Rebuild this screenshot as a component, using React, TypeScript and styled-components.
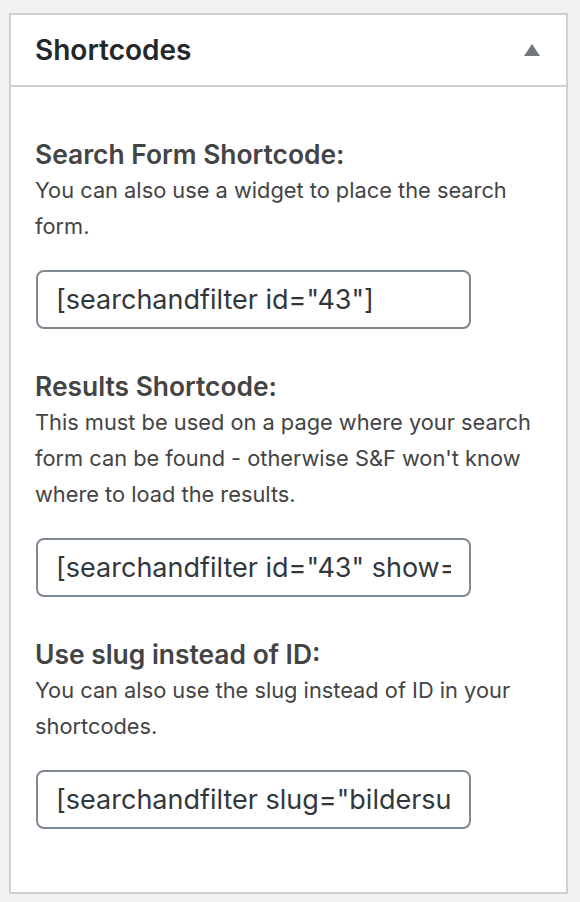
import React from "react";
import styled, { createGlobalStyle } from "styled-components";

const Global = createGlobalStyle`
  html, body { margin: 0; padding: 0; background: #f1f1f1; }
  body { font-family: Inter, "Noto Sans", "Liberation Sans", sans-serif; }
  * { box-sizing: border-box; }
`;

const Page = styled.div`
  padding: 13px 12px 0 9px;
  height: 902px;
`;

const Box = styled.section`
  width: 559px;
  height: 881px;
  background: #fff;
  border: 2px solid #ccd0d4;
`;

const Header = styled.header`
  display: flex;
  align-items: center;
  justify-content: space-between;
  height: 72px;
  padding: 0 26px 0 24px;
  border-bottom: 2px solid #ccd0d4;
`;

const Title = styled.h2`
  margin: 0;
  font-size: 28px;
  font-weight: 600;
  color: #23282d;
`;

const Toggle = styled.svg`
  width: 16px;
  height: 12px;
  display: block;
`;

const Inside = styled.div`
  display: flex;
  flex-direction: column;
  padding: 49px 24px 0 24px;
  gap: 39px;
`;

const Field = styled.div`
  display: flex;
  flex-direction: column;
`;

const Label = styled.strong`
  display: block;
  font-size: 26.4px;
  font-weight: 600;
  color: #444;
  line-height: 36px;
`;

const Desc = styled.p`
  margin: 0 0 26px 0;
  font-size: 21.8px;
  line-height: 36px;
  color: #444;
`;

const Input = styled.input`
  width: 435px;
  height: 59px;
  margin-left: 1px;
  padding: 0 18px;
  border: 2px solid #7e8993;
  border-radius: 8px;
  font-family: Inter, "Noto Sans", "Liberation Sans", sans-serif;
  font-size: 27px;
  color: #32373c;
  background: #fff;
  outline: none;
`;

const fields = [
  {
    label: "Search Form Shortcode:",
    desc: "You can also use a widget to place the search form.",
    value: '[searchandfilter id="43"]',
  },
  {
    label: "Results Shortcode:",
    desc: "This must be used on a page where your search form can be found - otherwise S&F won't know where to load the results.",
    value: '[searchandfilter id="43" show="results"]',
  },
  {
    label: "Use slug instead of ID:",
    desc: "You can also use the slug instead of ID in your shortcodes.",
    value: '[searchandfilter slug="bildersuche"]',
  },
];

export default function App() {
  return (
    <>
      <Global />
      <Page>
        <Box>
          <Header>
            <Title>Shortcodes</Title>
            <Toggle viewBox="0 0 16 12">
              <polygon points="8,0 16,12 0,12" fill="#72777c" />
            </Toggle>
          </Header>
          <Inside>
            {fields.map((f) => (
              <Field key={f.label}>
                <Label>{f.label}</Label>
                <Desc>{f.desc}</Desc>
                <Input readOnly value={f.value} />
              </Field>
            ))}
          </Inside>
        </Box>
      </Page>
    </>
  );
}
